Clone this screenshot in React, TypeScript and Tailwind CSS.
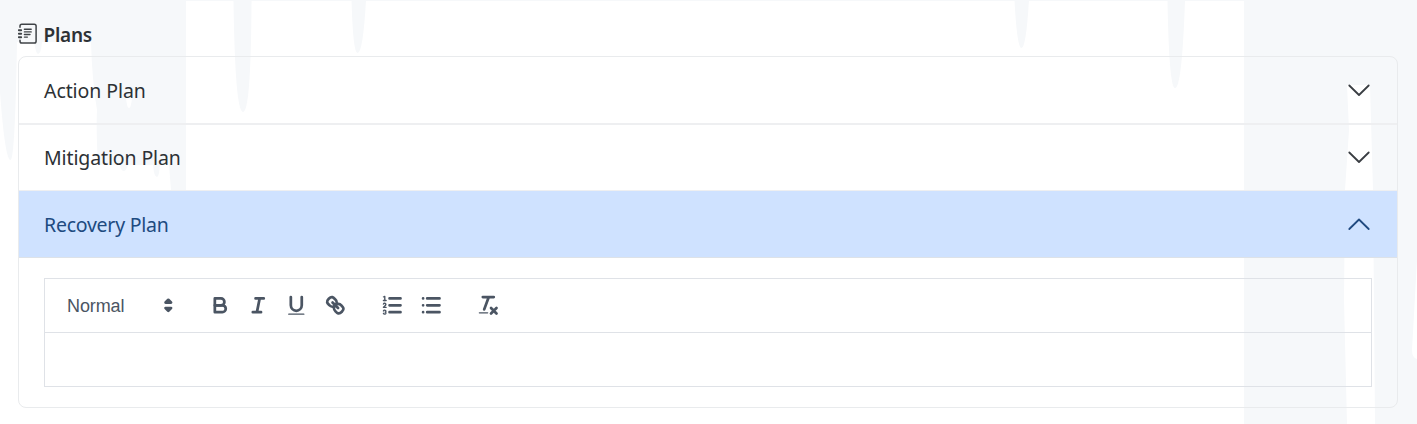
import React from "react";

const STROKE = { fill: "none", stroke: "#4b5563", strokeWidth: 2, strokeLinecap: "round", strokeLinejoin: "round" } as const;

function Tool({ children }: { children: React.ReactNode }) {
  return (
    <button type="button" className="flex h-[33px] w-[38.3px] items-center justify-center">
      <svg viewBox="0 0 18 18" className="h-[24.6px] w-[24.6px]" {...STROKE}>{children}</svg>
    </button>
  );
}

function JournalIcon() {
  return (
    <svg viewBox="0 0 20 22" className="mb-[2px] h-[22px] w-5" fill="none" stroke="#3f4347" strokeWidth="1.5" strokeLinecap="round">
      <path d="M2 4.200V3Q2 1.200 3.800 1.200H16.300Q18.100 1.200 18.100 3V18.300Q18.100 20.100 16.300 20.100H3.800Q2 20.100 2 18.300V17.300" />
      <path d="M.8 7.200h2.400M.8 10.700h2.400M.8 14.200h2.400" strokeWidth="1.900" />
      <path d="M6.400 6.300h6.800M6.400 8.900h6.800M6.400 11.500h5.600M6.400 14.100h3" strokeWidth="1.400" />
    </svg>
  );
}

function Backdrop() {
  return (
    <svg className="absolute inset-0 -z-10 h-[424px] w-[1417px]" viewBox="0 0 1417 424">
      <g fill="#f6f8fa">
        <path d="M0 0H1417V1H0Z" />
        <path d="M0 0H186V190H171L169 165H160Q159 177 157 177Q154 177 153 165H128Q126 171 124 171Q121 171 120 165H98Q96 130 97 110Q92 80 91 42H42Q41 54 38 54Q36 54 34 42H17Q15 160 10.500 160Q5 160 0 92Z" />
        <path d="M233.500 0H251.500Q251 112 243 112Q235 112 233.500 0Z" />
        <path d="M351.500 0H366Q363 53 357.500 53Q353 53 351.500 0Z" />
        <path d="M1014.500 0H1029Q1026 48 1021.500 48Q1017 48 1014.500 0Z" />
        <path d="M1167.500 0H1185Q1182 88 1175 88Q1169 88 1167.500 0Z" />
        <path d="M1244 0H1417V424H1375L1373 190L1370 85H1347L1349 130L1345 190L1344 300L1347 424H1244Z" />
      </g>
      <path d="M1417 260L1412 350Q1412 358 1417 359ZM126 98H132Q131 108 129 108Q127 108 126 98Z" fill="#fff" />
    </svg>
  );
}

function Chevron({ open = false }: { open?: boolean }) {
  return (
    <svg viewBox="0 0 24 24" className="h-6 w-6" fill="none" stroke={open ? "#204a80" : "#3a3e43"} strokeWidth="1.8" strokeLinecap="round" strokeLinejoin="round">
      <path d={open ? "M2.300 17 12 7.500l9.700 9.500" : "M2.300 7.500 12 17l9.700-9.500"} />
    </svg>
  );
}

export default function App() {
  return (
    <main className="relative isolate h-[424px] w-[1417px] overflow-hidden bg-white pr-[19px] pl-[18px] font-['Noto_Sans','Open_Sans',sans-serif] text-[#2d3135]">
      <Backdrop />
      <header className="flex h-14 items-center gap-[5.5px] pt-[13px]">
        <JournalIcon />
        <h2 className="pt-px text-[19px] leading-[28px] font-semibold tracking-[-0.25px]">Plans</h2>
      </header>
      <section className="h-[352px] overflow-hidden rounded-lg border border-[#e9ebed]">
        <button type="button" className="flex h-[68px] w-full items-center justify-between border-b-2 border-[#eeeff1] pr-[26px] pl-[25px] text-left text-[19.5px] tracking-[-0.08px]">
          <span className="pt-px">Action Plan</span><Chevron />
        </button>
        <button type="button" className="flex h-[66px] w-full items-center justify-between border-b border-[#eeeff1] pr-[26px] pb-px pl-[25px] text-left text-[19.5px] tracking-[-0.12px]">
          <span className="pt-[2px]">Mitigation Plan</span><Chevron />
        </button>
        <button type="button" className="flex h-[67px] w-full items-center justify-between border-b border-[#dde2e8] bg-[#cfe2ff] pr-[26px] pl-[25px] text-left text-[19.5px] tracking-[-0.24px] text-[#204a80]">
          <span className="pt-[2px]">Recovery Plan</span><Chevron open />
        </button>
        <div className="pt-5 pr-[25px] pl-[25px]">
          <div className="h-[109px] border border-[#dfe2e7]">
            <div className="flex h-[54px] items-center border-b border-[#dfe2e7] pl-[11px] font-['Liberation_Sans',sans-serif] text-[#4b5563]">
              <button type="button" className="mr-5 flex h-[33px] w-[125px] items-center justify-between pl-[11px] text-[18px] tracking-[-0.1px]">
                <span className="pt-px">Normal</span>
                <svg viewBox="0 0 18 18" className="h-[24.6px] w-[24.6px]" {...STROKE} fill="#4b5563">
                  <path d="M7 11 9 13 11 11Z" /><path d="M7 7 9 5 11 7Z" />
                </svg>
              </button>
              <Tool><path d="M5,4H9.5A2.5,2.5,0,0,1,12,6.5v0A2.5,2.5,0,0,1,9.5,9H5V4Z" /><path d="M5,9h5.500A2.5,2.5,0,0,1,13,11.5v0A2.5,2.5,0,0,1,10.5,14H5V9Z" /></Tool>
              <Tool><path d="M7 4h6M5 14h6M8 14 10 4" /></Tool>
              <Tool><path d="M5,3V9a4.012,4.012,0,0,0,4,4H9a4.012,4.012,0,0,0,4-4V3" /><rect x="3" y="15" width="12" height="1" rx=".5" fill="#4b5563" stroke="none" /></Tool>
              <Tool><path d="M7 7 11 11" /><path d="M8.9,4.577a3.476,3.476,0,0,1,.36,4.679A3.476,3.476,0,0,1,4.577,8.9C3.185,7.5,2.035,6.4,4.217,4.217S7.5,3.185,8.9,4.577Z" /><path d="M13.423,9.1a3.476,3.476,0,0,0-4.679-.36,3.476,3.476,0,0,0,.36,4.679c1.392,1.392,2.5,2.542,4.679.36S14.815,10.5,13.423,9.1Z" /></Tool>
              <div className="ml-[19.3px] flex">
                <Tool>
                  <path d="M7 4h8M7 9h8M7 14h8" />
                  <path strokeWidth="1" d="M2.500 5.500h2" />
                  <path fill="#4b5563" stroke="none" d="M3.5,6A0.5,0.5,0,0,1,3,5.5V3.085l-0.276.138A0.5,0.5,0,0,1,2.053,3c-0.124-.247-0.023-0.324.224-0.447l1-.5A0.5,0.5,0,0,1,4,2.5v3A0.5,0.5,0,0,1,3.5,6Z" />
                  <path strokeWidth="1" d="M4.5,10.5h-2c0-.234,1.85-1.076,1.85-2.234A0.959,0.959,0,0,0,2.5,8.156" />
                  <path strokeWidth="1" d="M2.5,14.846a0.959,0.959,0,0,0,1.85-.109A0.7,0.7,0,0,0,3.75,14a0.688,0.688,0,0,0,.6-0.736,0.959,0.959,0,0,0-1.85-.109" />
                </Tool>
                <Tool><path d="M6 4h9M6 9h9M6 14h9M3 4h0M3 9h0M3 14h0" /></Tool>
              </div>
              <div className="ml-[18.8px] flex">
                <Tool><path d="M5 3h8M6 12 9.350 3M11 11 15 15M15 11 11 15" /><rect x="2" y="14" width="7" height="1" rx=".5" fill="#4b5563" stroke="none" /></Tool>
              </div>
            </div>
          </div>
        </div>
      </section>
    </main>
  );
}
